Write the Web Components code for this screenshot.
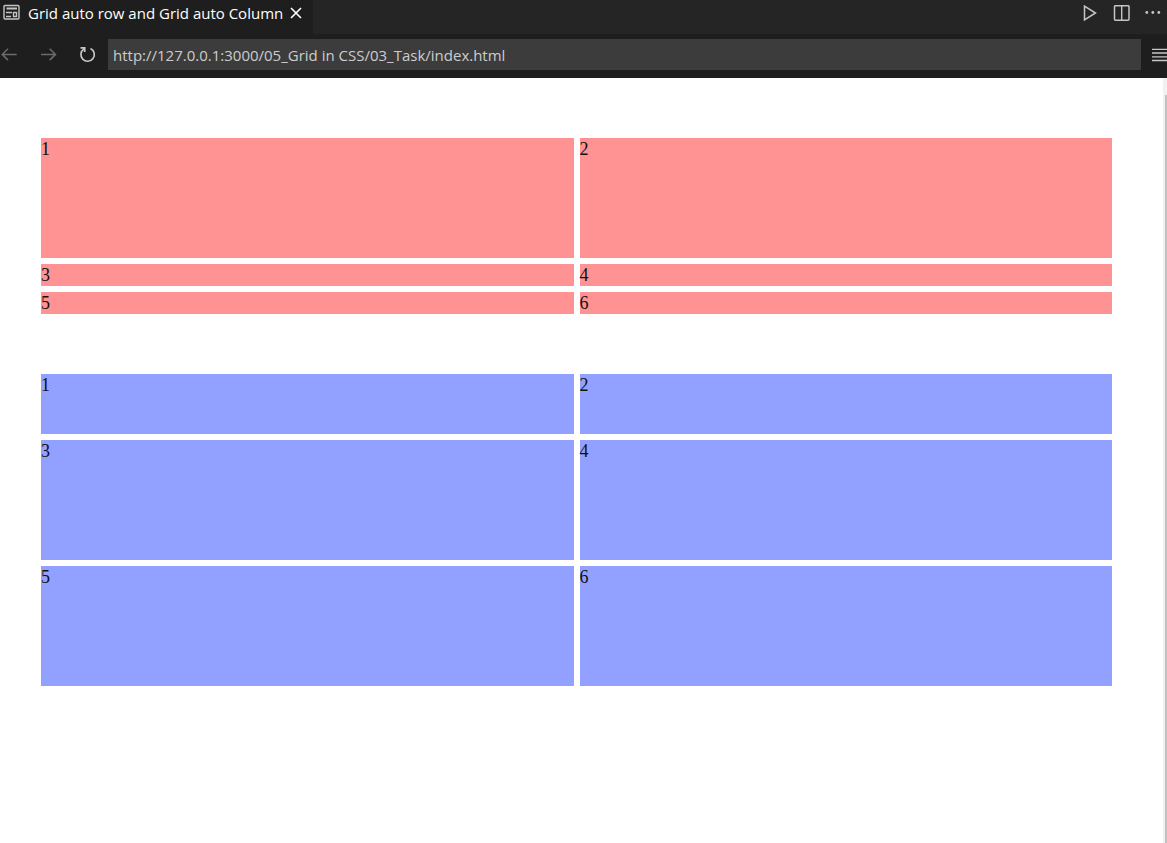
<!DOCTYPE html>
<html lang="en">
<head>
<meta charset="utf-8">
<title>Grid auto row and Grid auto Column</title>
<style>
html, body { height: 100%; }
body { margin: 0; background: #fff; overflow: hidden; }
</style>
</head>
<body>
<preview-window>
  <tab-bar slot="tabs">Grid auto row and Grid auto Column</tab-bar>
  <address-bar slot="address" url="http://127.0.0.1:3000/05_Grid in CSS/03_Task/index.html"></address-bar>
  <demo-grid rows="120px" auto="22px" color="#ff9292">
    <grid-cell>1</grid-cell><grid-cell>2</grid-cell><grid-cell>3</grid-cell>
    <grid-cell>4</grid-cell><grid-cell>5</grid-cell><grid-cell>6</grid-cell>
  </demo-grid>
  <demo-grid rows="60px" auto="120px" color="#92a0ff">
    <grid-cell>1</grid-cell><grid-cell>2</grid-cell><grid-cell>3</grid-cell>
    <grid-cell>4</grid-cell><grid-cell>5</grid-cell><grid-cell>6</grid-cell>
  </demo-grid>
</preview-window>

<script>
const buttonReset = `
  button { display: grid; place-items: center; flex: none; padding: 0; border: 0; background: none; color: inherit; }
  svg { display: block; fill: none; stroke: currentColor; }
`;

function define(name, markup, setup) {
  customElements.define(name, class extends HTMLElement {
    constructor() {
      super();
      this.attachShadow({ mode: 'open' }).innerHTML = markup;
    }
    connectedCallback() {
      if (setup) setup(this);
    }
  });
}

define('preview-window', `
  <style>
    :host { display: flex; flex-direction: column; height: 100vh; }
    .view { flex: 1; display: flex; min-height: 0; background: #fff; }
    main { flex: 1; display: flex; flex-direction: column; gap: 60px; padding: 60px 51px 0 41px; }
    .scroll { width: 4px; box-sizing: border-box; padding: 17px 0 0 2px; background: #f1f1f1; display: flex; }
    .thumb { flex: 1; background: #c1c1c1; }
  </style>
  <slot name="tabs"></slot>
  <slot name="address"></slot>
  <div class="view">
    <main><slot></slot></main>
    <div class="scroll"><div class="thumb"></div></div>
  </div>
`);

define('tab-bar', `
  <style>
    ${buttonReset}
    :host { display: flex; justify-content: space-between; height: 34px; background: #252526; color: #fff; font: 15px/26px "Open Sans", "Noto Sans", sans-serif; }
    .tab { display: flex; align-items: flex-start; padding: 0 8px 0 3px; background: #1e1e1e; white-space: nowrap; }
    .tab > svg { margin: 4px 8px 0 0; color: #c5c5c5; }
    .tab button { width: 18px; height: 26px; margin-left: 4px; }
    .actions { display: flex; gap: 10px; padding-right: 4px; color: #c5c5c5; }
    .actions button { width: 21px; height: 26px; }
  </style>
  <div class="tab">
    <svg width="17" height="17" viewBox="0 0 17 17"><rect x="1" y="1.500" width="15" height="13.500" rx="1" stroke-width="1.400"/><path d="M3.500 4.500h10.500" stroke-width="2"/><path d="M3 8.500h6M3 12.500h5" stroke-width="1.500"/><path d="M10.500 8.500h3v4h-3z" stroke-width="1.400"/></svg>
    <span><slot></slot></span>
    <button aria-label="Close tab"><svg width="12" height="12" viewBox="0 0 12 12"><path d="M1 1l10 10M11 1L1 11" stroke-width="1.6"/></svg></button>
  </div>
  <div class="actions">
    <button aria-label="Run"><svg width="15" height="18" viewBox="0 0 15 18"><path d="M1.500 2v14l11-7z" stroke-width="1.5"/></svg></button>
    <button aria-label="Split editor"><svg width="17" height="17" viewBox="0 0 17 17"><rect x="1.500" y=".7" width="14.500" height="14.500" rx="1" stroke-width="1.500"/><path d="M8.700 1v14" stroke-width="1.400"/></svg></button>
    <button aria-label="More actions"><svg width="16" height="4" viewBox="0 0 16 4" style="fill:currentColor;stroke:none"><circle cx="1.800" cy="1.500" r="1.400"/><circle cx="7.800" cy="1.500" r="1.400"/><circle cx="13.800" cy="1.500" r="1.400"/></svg></button>
  </div>
`);

define('address-bar', `
  <style>
    ${buttonReset}
    :host { display: flex; align-items: center; height: 44px; box-sizing: border-box; padding-bottom: 3px; background: #1e1e1e; color: #c5c5c5; overflow: hidden; }
    nav { display: flex; gap: 19px; width: 108px; flex: none; }
    nav button { width: 20px; height: 24px; }
    nav button:disabled { color: #6b6b6b; }
    input { flex: 1; min-width: 0; height: 31px; box-sizing: border-box; border: 0; border-radius: 0; padding: 0 5px; background: #3c3c3c; color: #ccc; font: 15px "Open Sans", "Noto Sans", sans-serif; outline: 0; }
    .menu { width: 26px; height: 24px; justify-items: end; }
  </style>
  <nav>
    <button disabled aria-label="Back"><svg width="18" height="16" viewBox="0 0 18 16"><path d="M15.700 7.400H1.200M7 1.700L1.200 7.400 7 13.100" stroke-width="1.500"/></svg></button>
    <button disabled aria-label="Forward"><svg width="18" height="16" viewBox="0 0 18 16"><path d="M1 7.400h14.500M9.700 1.700l5.800 5.700-5.800 5.700" stroke-width="1.500"/></svg></button>
    <button aria-label="Reload"><svg width="18" height="18" viewBox="0 0 18 18"><path d="M11.500 2.500A6.700 6.700 0 1 1 5 2.900M1.500 1.800H5.700V6" stroke-width="1.700"/></svg></button>
  </nav>
  <input type="text" aria-label="Address" spellcheck="false">
  <button class="menu" aria-label="Menu"><svg width="15" height="14" viewBox="0 0 15 14"><path d="M0 1.300h15M0 5h15M0 8.800h15M0 12.500h15" stroke-width="1.300"/></svg></button>
`, el => { el.shadowRoot.querySelector('input').value = el.getAttribute('url'); });

define('demo-grid', `
  <style>
    :host { display: grid; grid-template-columns: 1fr 1fr; gap: 6px; }
  </style>
  <slot></slot>
`, el => {
  el.style.gridTemplateRows = el.getAttribute('rows');
  el.style.gridAutoRows = el.getAttribute('auto');
  el.style.setProperty('--cell', el.getAttribute('color'));
});

define('grid-cell', `
  <style>
    :host { display: block; background: var(--cell); color: #111; font: 18px/22px "Liberation Serif", serif; }
  </style>
  <slot></slot>
`);
</script>
</body>
</html>
